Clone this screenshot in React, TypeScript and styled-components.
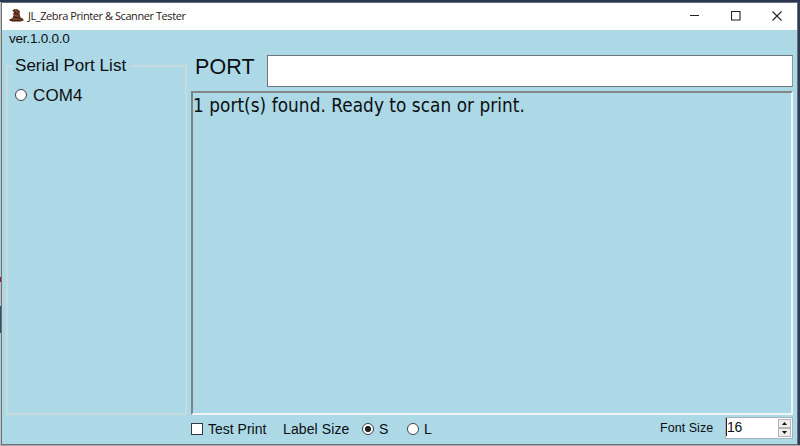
import React from "react";
import styled, { createGlobalStyle } from "styled-components";

const GlobalStyle = createGlobalStyle`
  * { box-sizing: border-box; }
  body { margin: 0; overflow: hidden; font-family: "Liberation Sans", Arial, sans-serif; color: #0b0f12; }
`;

const Desktop = styled.div`
  width: 800px;
  height: 446px;
  display: grid;
  grid-template-columns: 1px 797px 2px;
  grid-template-rows: 2px 443px 1px;
  background: #2e3a58;
`;

const TopStrip = styled.div`
  grid-column: 1 / -1;
  background: #2b3655;
`;

const LeftStrip = styled.div`
  background: linear-gradient(
    #c3c3c6 0 33px, #d4bd80 33px 35px, #c3c3c6 35px 275px,
    #8a2630 275px 280px, #c8bdb8 280px 304px, #3f4a6b 304px 331px, #c3c3c6 331px
  );
`;

const BottomStrip = styled.div`
  grid-column: 1 / -1;
  background: #a9adb0;
`;

const Window = styled.div`
  display: flex;
  flex-direction: column;
  border: 1px solid #667276;
  background: #add8e6;
`;

const TitleBar = styled.div`
  height: 27px;
  display: flex;
  align-items: center;
  background: #fff;
  padding-left: 7px;
  flex: none;
`;

const AppIcon = styled.svg`
  width: 15px;
  height: 15px;
  flex: none;
  margin-top: -2px;
`;

const Text = styled.span<{ $size: number; $spacing?: number }>`
  font-size: ${(p) => p.$size}px;
  letter-spacing: ${(p) => p.$spacing ?? 0}px;
  line-height: 1;
  white-space: pre;
`;

const Title = styled(Text)`
  font-family: "Open Sans", "Noto Sans", sans-serif;
  color: #2c2020;
  margin: -2px 0 0 4px;
  flex: 1;
`;

const Controls = styled.div`
  display: flex;
  width: 123px;
  margin-top: -2px;
`;

const ControlButton = styled.button`
  width: 41px;
  height: 26px;
  padding: 0;
  border: 0;
  background: none;
  display: flex;
  align-items: center;
  justify-content: center;
`;

const Client = styled.div`
  height: 385px;
  display: grid;
  grid-template-columns: 185px 602px;
  padding-left: 4px;
`;

const LeftPane = styled.div`
  display: flex;
  flex-direction: column;
`;

const Version = styled(Text)`
  height: 26px;
  padding: 2px 0 0 3px;
`;

const Group = styled.fieldset`
  margin: 0;
  width: 181px;
  height: 359px;
  padding: 0 0 0 7px;
  border: 2px solid #c7dade;
  border-radius: 1px;
  min-width: 0;
`;

const Legend = styled.legend`
  margin-left: -3px;
  padding: 0 4px 0 3px;
  height: 20px;
  line-height: 20px;
  font-size: 17px;
  letter-spacing: 0.04px;
`;

const RightPane = styled.div`
  display: flex;
  flex-direction: column;
  gap: 4px;
  padding-top: 25px;
`;

const PortRow = styled.div`
  display: flex;
  height: 32px;
`;

const PortLabel = styled(Text)`
  width: 76px;
  padding: 2px 0 0 4px;
`;

const PortField = styled.div`
  flex: 1;
  background: #fff;
  border: 1px solid #70777a;
  border-right-color: #8d9699;
`;

const Output = styled.div`
  flex: 1;
  border: 2px solid;
  border-color: #838789 #f1f4f4 #f1f4f4 #7c8386;
  padding: 3px 0 0 0;
  font-family: "DejaVu Sans Condensed", "DejaVu Sans", Tahoma, sans-serif;
  font-stretch: condensed;
  line-height: 22px;
`;

const Footer = styled.div`
  flex: 1;
  display: flex;
  align-items: center;
  padding: 0 4px 2px 189px;
`;

const Option = styled.label<{ $width?: number; $gap: number; $top?: number }>`
  display: flex;
  align-items: center;
  gap: ${(p) => p.$gap}px;
  width: ${(p) => (p.$width ? `${p.$width}px` : "auto")};
  margin-top: ${(p) => p.$top ?? 0}px;
`;

const PortName = styled(Text)`
  padding-top: 1px;
`;

const CheckMark = styled.span`
  width: 12px;
  height: 12px;
  background: #fff;
  border: 1px solid #333b3f;
`;

const RadioMark = styled.span<{ $checked?: boolean }>`
  width: 12px;
  height: 12px;
  border-radius: 50%;
  border: 1px solid #3d4346;
  background: ${(p) => (p.$checked ? "radial-gradient(circle, #252525 2.8px, #fff 3.5px)" : "#fff")};
`;

const FooterText = styled(Text)<{ $width?: number }>`
  width: ${(p) => (p.$width ? `${p.$width}px` : "auto")};
`;

const FontSize = styled.div`
  margin-left: auto;
  display: flex;
  align-items: center;
`;

const Spinner = styled.div`
  width: 68px;
  height: 22px;
  display: flex;
  justify-content: space-between;
  background: #fff;
  border: 1px solid #a9b2b6;
  margin-top: -1px;
`;

const SpinnerValue = styled(Text)`
  height: 18px;
  padding-top: 2px;
  border-left: 1px solid #222;
`;

const Arrows = styled.div`
  display: flex;
  flex-direction: column;
  width: 14px;
  padding: 1px 1px 0 0;
`;

const ArrowButton = styled.button`
  height: 9px;
  padding: 0;
  border: 1px solid #b5b5b5;
  background: #ededed;
  display: flex;
  align-items: center;
  justify-content: center;
`;

export default function App() {
  return (
    <>
      <GlobalStyle />
      <Desktop>
        <TopStrip />
        <LeftStrip />
        <Window>
          <TitleBar>
            <AppIcon viewBox="0 0 15 15">
              <path d="M3.2 2.8 5 1.2l3.6.1L11 3.6l-.5 2.2 1 3.8 2.6 1.2.6 1.6-3.2 1.2H3.5L.3 12.4l.2-1.1 2.9-1L4.6 7.5 4 5.7l1.4-1.3Z" fill="#5b2e20" />
              <path d="M5.6 2.2 8.5 3 9 5l-2-.7ZM5 6l4 1.2.4 2L5 8.3ZM4 10.2l6 .5 1.7 1.1-3 .6-5-.7Z" fill="#85492f" />
              <path d="m5 4.3 2.7 1.5M4.5 8.8l5 .9M2 12.6h9" stroke="#3a1c13" strokeWidth=".8" />
            </AppIcon>
            <Title $size={11} $spacing={-0.43}>JL_Zebra Printer &amp; Scanner Tester</Title>
            <Controls>
              <ControlButton aria-label="Minimize">
                <svg width="9" height="9"><path d="M0 4.5h9" stroke="#222" /></svg>
              </ControlButton>
              <ControlButton aria-label="Maximize">
                <svg width="10" height="10"><path d="M.5.5h8.5v8.5H.5Z" fill="none" stroke="#222" strokeWidth="1.1" /></svg>
              </ControlButton>
              <ControlButton aria-label="Close">
                <svg width="10" height="10"><path d="m.5.5 9 9m0-9-9 9" stroke="#222" strokeWidth="1.1" /></svg>
              </ControlButton>
            </Controls>
          </TitleBar>
          <Client>
            <LeftPane>
              <Version $size={13.5} $spacing={-0.22}>ver.1.0.0.0</Version>
              <Group>
                <Legend>Serial Port List</Legend>
                <Option $gap={6} $top={10} $width={100}>
                  <RadioMark />
                  <PortName $size={17} $spacing={0.1}>COM4</PortName>
                </Option>
              </Group>
            </LeftPane>
            <RightPane>
              <PortRow>
                <PortLabel $size={21.5} $spacing={0.1}>PORT</PortLabel>
                <PortField />
              </PortRow>
              <Output>
                <Text $size={18.8} $spacing={0.06}>1 port(s) found. Ready to scan or print.</Text>
              </Output>
            </RightPane>
          </Client>
          <Footer>
            <Option $gap={5} $width={92}>
              <CheckMark />
              <Text $size={14}>Test Print</Text>
            </Option>
            <FooterText $size={14} $spacing={0.1} $width={79}>Label Size</FooterText>
            <Option $gap={5} $width={45}>
              <RadioMark $checked />
              <Text $size={14}>S</Text>
            </Option>
            <Option $gap={5}>
              <RadioMark />
              <Text $size={14}>L</Text>
            </Option>
            <FontSize>
              <FooterText $size={12.5} $spacing={0.05} $width={65}>Font Size</FooterText>
              <Spinner>
                <SpinnerValue $size={14} $spacing={-0.4}>16</SpinnerValue>
                <Arrows>
                  <ArrowButton aria-label="Increase">
                    <svg width="5" height="3"><path d="M0 3 2.5 0 5 3Z" fill="#111" /></svg>
                  </ArrowButton>
                  <ArrowButton aria-label="Decrease">
                    <svg width="5" height="3"><path d="M0 0h5L2.5 3Z" fill="#111" /></svg>
                  </ArrowButton>
                </Arrows>
              </Spinner>
            </FontSize>
          </Footer>
        </Window>
        <div />
        <BottomStrip />
      </Desktop>
    </>
  );
}
